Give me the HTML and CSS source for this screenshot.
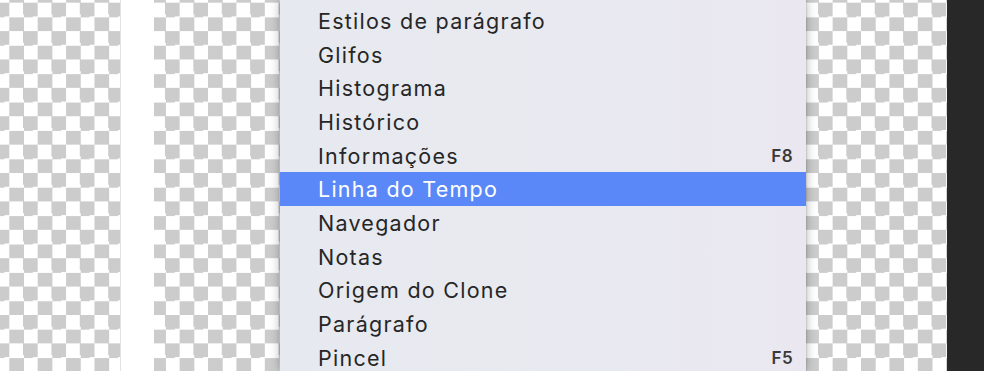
FILE: index.html
```html
<!DOCTYPE html>
<html lang="pt-BR">
<head>
<meta charset="utf-8">
<title>Menu Janela</title>
<link rel="stylesheet" href="styles.css">
</head>
<body>
<div class="stage">
  <div class="canvas canvas-left"></div>
  <div class="gutter"></div>
  <div class="canvas canvas-main">
    <ul class="menu">
      <li class="item"><span class="label">Estilos de parágrafo</span></li>
      <li class="item"><span class="label">Glifos</span></li>
      <li class="item"><span class="label">Histograma</span></li>
      <li class="item"><span class="label">Histórico</span></li>
      <li class="item"><span class="label">Informações</span><span class="key">F8</span></li>
      <li class="item selected"><span class="label">Linha do Tempo</span></li>
      <li class="item"><span class="label">Navegador</span></li>
      <li class="item"><span class="label">Notas</span></li>
      <li class="item"><span class="label">Origem do Clone</span></li>
      <li class="item"><span class="label">Parágrafo</span></li>
      <li class="item"><span class="label">Pincel</span><span class="key">F5</span></li>
    </ul>
  </div>
  <div class="dock"></div>
</div>
</body>
</html>
```
FILE: styles.css
```css
html, body {
  margin: 0;
  padding: 0;
  height: 100%;
  overflow: hidden;
}

body {
  background-color: #ffffff;
  background-image: repeating-conic-gradient(#cccccc 0 25%, #ffffff 0 50%);
  background-size: 28.4px 28.4px;
  background-position: 9.3px 2.7px;
  font-family: "Inter", "Liberation Sans", sans-serif;
}

.stage {
  display: flex;
  height: 371px;
  width: 984px;
}

.canvas-left {
  width: 120px;
  flex: none;
}

.gutter {
  width: 34px;
  flex: none;
  background: #ffffff;
  border-left: 1px solid #e2e2e2;
  box-sizing: border-box;
}

.canvas-main {
  flex: 1;
  display: flex;
  padding-left: 126px;
}

.dock {
  width: 37px;
  flex: none;
  background: #282828;
}

.menu {
  list-style: none;
  margin: 0;
  padding: 4px 0 0;
  width: 526px;
  height: 100%;
  box-sizing: border-box;
  background: linear-gradient(90deg, #e6e9ef 0%, #e8eaf0 45%, #eae7f0 100%);
  box-shadow: 0 0 10px rgba(0, 0, 0, 0.3), 0 0 2px rgba(0, 0, 0, 0.25);
}

.item {
  display: flex;
  align-items: center;
  justify-content: space-between;
  height: 33.7px;
  padding: 0 13px 0 38px;
  color: #262626;
  font-size: 21.5px;
  letter-spacing: 1.25px;
}

.item.selected {
  background: #5a88f8;
  color: #ffffff;
}

.key {
  font-size: 17px;
  font-weight: 600;
  letter-spacing: 0.4px;
  color: #3a3a3a;
}
```
